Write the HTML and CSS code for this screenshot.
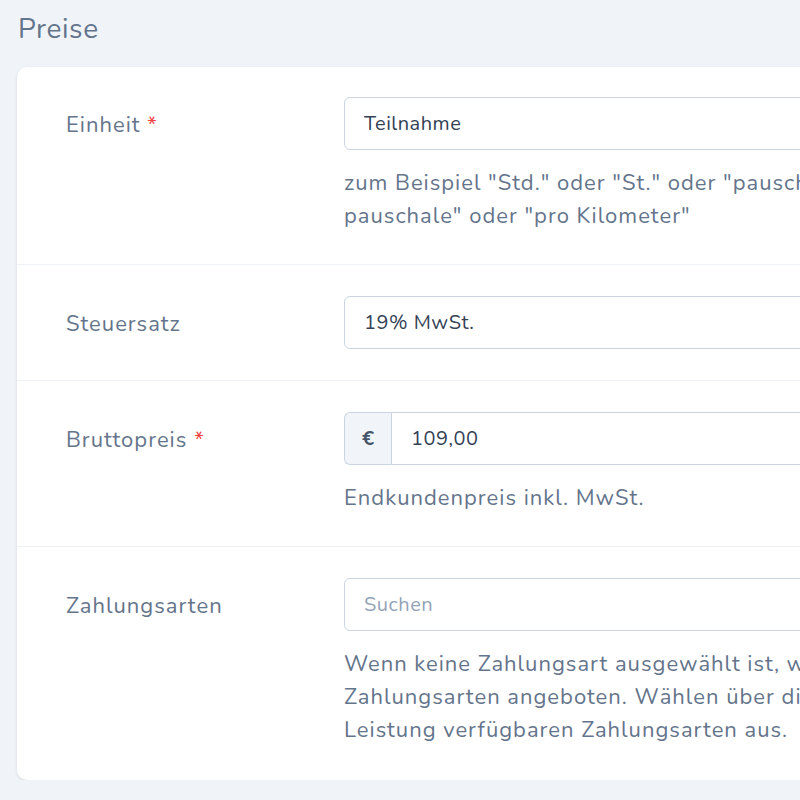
FILE: index.html
```html
<!DOCTYPE html>
<html lang="de">
<head>
    <meta charset="UTF-8">
    <meta name="viewport" content="width=device-width, initial-scale=1.0">
    <title>Preise</title>
    <link rel="stylesheet" href="styles.css">
</head>
<body>
    <h2 class="section-title">Preise</h2>
    <div class="card">
        <div class="form-row">
            <label class="form-label" for="unit">Einheit <span class="required">*</span></label>
            <div class="form-field">
                <input type="text" id="unit" class="form-input" value="Teilnahme">
                <p class="form-help">zum Beispiel "Std." oder "St." oder "pauschal" oder "Tages-<br>pauschale" oder "pro Kilometer"</p>
            </div>
        </div>
        <div class="form-row">
            <label class="form-label" for="tax">Steuersatz</label>
            <div class="form-field">
                <div class="form-input select-box" id="tax">19% MwSt.</div>
            </div>
        </div>
        <div class="form-row">
            <label class="form-label" for="price">Bruttopreis <span class="required">*</span></label>
            <div class="form-field">
                <div class="input-group">
                    <span class="input-addon">€</span>
                    <input type="text" id="price" class="form-input grouped" value="109,00">
                </div>
                <p class="form-help">Endkundenpreis inkl. MwSt.</p>
            </div>
        </div>
        <div class="form-row">
            <label class="form-label" for="payment">Zahlungsarten</label>
            <div class="form-field">
                <input type="text" id="payment" class="form-input" placeholder="Suchen">
                <p class="form-help">Wenn keine Zahlungsart ausgewählt ist, werden dem Kunden alle<br>Zahlungsarten angeboten. Wählen über die Auswahl die für diese<br>Leistung verfügbaren Zahlungsarten aus.</p>
            </div>
        </div>
    </div>
</body>
</html>
```

FILE: styles.css
```css
body {
    font-family: "Nunito", "Noto Sans", sans-serif;
    background-color: #f0f4f9;
    margin: 0;
    padding: 0 0 0 17px;
    overflow: hidden;
    color: #64748b;
}
.section-title {
    font-size: 28px;
    font-weight: 400;
    letter-spacing: 0.6px;
    color: #64748b;
    margin: 0;
    padding: 10px 0 0 1px;
    height: 67px;
    box-sizing: border-box;
}
.card {
    width: 1200px;
    background-color: #fff;
    border-radius: 10px;
    box-shadow: 0 1px 3px rgba(0, 0, 0, 0.12);
}
.form-row {
    display: grid;
    grid-template-columns: 278px 1fr;
    padding: 31px 49px;
    border-bottom: 1px solid #eef1f5;
}
.form-row:first-child {
    padding-top: 30px;
}
.form-row:last-child {
    border-bottom: none;
    padding-bottom: 33px;
}
.form-label {
    font-size: 22px;
    letter-spacing: 1px;
    line-height: 50px;
    padding-top: 3px;
    color: #64748b;
}
.required {
    color: #ef4444;
}
.form-input {
    display: block;
    width: 100%;
    height: 53px;
    box-sizing: border-box;
    border: 1px solid #cbd5e1;
    border-radius: 6px;
    padding: 0 19px;
    font-family: inherit;
    font-size: 20px;
    letter-spacing: 0.5px;
    color: #334155;
    background: #fff;
    line-height: 51px;
}
.form-input::placeholder {
    color: #94a3b8;
}
.form-help {
    margin: 17px 0 0;
    font-size: 22px;
    letter-spacing: 1px;
    line-height: 33px;
    color: #64748b;
}
.input-group {
    display: flex;
}
.input-addon {
    width: 50px;
    height: 53px;
    box-sizing: border-box;
    border: 1px solid #cbd5e1;
    border-right: none;
    border-radius: 6px 0 0 6px;
    background-color: #f1f5f9;
    text-align: center;
    line-height: 51px;
    font-size: 20px;
    font-weight: 700;
    color: #475569;
}
.form-input.grouped {
    border-radius: 0 6px 6px 0;
}
```
